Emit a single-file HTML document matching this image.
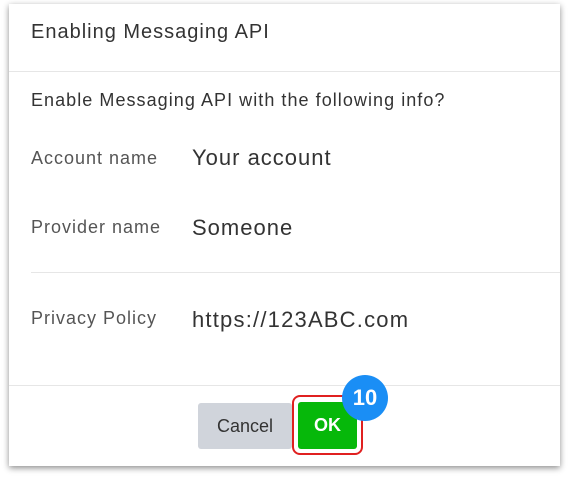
<html><head><style>
body{margin:0;width:568px;height:478px;background:#fff;font-family:"Liberation Sans",sans-serif;position:relative;overflow:hidden}
.d{position:absolute;left:9px;top:4px;width:551px;height:462px;background:#fff;box-shadow:0 2px 6px rgba(0,0,0,.45)}
.t{position:absolute;white-space:nowrap}
</style></head><body>
<div class="d"></div>
<div class="t" style="left:31px;top:21px;font-size:20px;letter-spacing:1px;color:#333">Enabling Messaging API</div>
<div style="position:absolute;left:9px;top:71px;width:551px;height:1px;background:#e6e6e6"></div>
<div class="t" style="left:31px;top:90px;font-size:18px;letter-spacing:1.05px;color:#333">Enable Messaging API with the following info?</div>
<div class="t" style="left:31px;top:148px;font-size:18px;letter-spacing:1px;color:#555">Account name</div>
<div class="t" style="left:192px;top:145px;font-size:22px;letter-spacing:1px;color:#333">Your account</div>
<div class="t" style="left:31px;top:217px;font-size:18px;letter-spacing:1px;color:#555">Provider name</div>
<div class="t" style="left:192px;top:215px;font-size:22px;letter-spacing:1px;color:#333">Someone</div>
<div style="position:absolute;left:31px;top:272px;width:529px;height:1px;background:#e6e6e6"></div>
<div class="t" style="left:31px;top:308px;font-size:18px;letter-spacing:1px;color:#555">Privacy Policy</div>
<div class="t" style="left:192px;top:307px;font-size:22px;letter-spacing:1.2px;color:#333">https://123ABC.com</div>
<div style="position:absolute;left:9px;top:385px;width:551px;height:1px;background:#e6e6e6"></div>
<div style="position:absolute;left:198px;top:403px;width:94px;height:46px;background:#d0d4db;border-radius:3px;color:#333;font-size:18px;line-height:46px;text-align:center">Cancel</div>
<div style="position:absolute;left:292px;top:395px;width:67px;height:56px;border:2px solid #e02020;border-radius:8px"></div>
<div style="position:absolute;left:298px;top:402px;width:59px;height:47px;background:#06b80a;border-radius:3px;color:#fff;font-weight:bold;font-size:18px;line-height:47px;text-align:center">OK</div>
<div style="position:absolute;left:342px;top:375px;width:46px;height:46px;border-radius:50%;background:#1a8ef5;color:#fff;font-weight:bold;font-size:22px;line-height:46px;text-align:center">10</div>
</body></html>
